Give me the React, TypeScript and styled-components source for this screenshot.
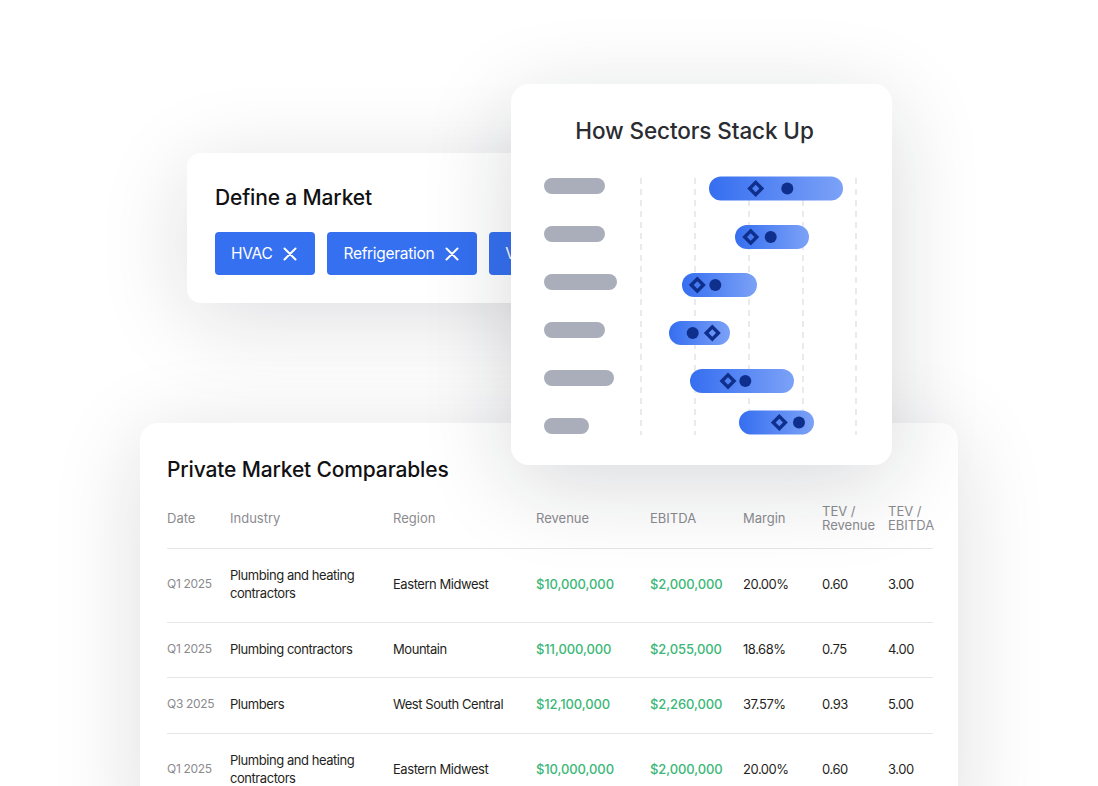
import React from "react";
import styled, { createGlobalStyle } from "styled-components";

const GlobalStyle = createGlobalStyle`
  html, body {
    margin: 0;
    padding: 0;
    background: #ffffff;
    overflow: hidden;
  }
  body {
    font-family: Inter, "Noto Sans", "Liberation Sans", sans-serif;
    color: #1c1c1e;
  }
  * {
    box-sizing: border-box;
  }
`;

const chips = ["HVAC", "Refrigeration", "Ventilation"];

const labels = [61, 61, 73, 61, 70, 45];
const grid = [130, 184, 238, 292, 345];

const bars = [
  { x1: 198, x2: 332, cy: 20.5, diamond: 244.7, dot: 276.3, label: 18 },
  { x1: 224, x2: 298, cy: 69, diamond: 239.7, dot: 259.7, label: 66 },
  { x1: 171, x2: 246, cy: 117, diamond: 186.3, dot: 204.3, label: 114 },
  { x1: 158, x2: 219, cy: 165, diamond: 201.3, dot: 181.7, label: 162 },
  { x1: 179, x2: 283, cy: 213, diamond: 217, dot: 234.3, label: 210 },
  { x1: 228, x2: 303, cy: 254.5, diamond: 268.3, dot: 288, label: 258 },
];

const columns = [
  "Date",
  "Industry",
  "Region",
  "Revenue",
  "EBITDA",
  "Margin",
  "TEV /\nRevenue",
  "TEV /\nEBITDA",
];

const rows = [
  {
    date: "Q1 2025",
    industry: "Plumbing and heating contractors",
    region: "Eastern Midwest",
    revenue: "$10,000,000",
    ebitda: "$2,000,000",
    margin: "20.00%",
    tevRev: "0.60",
    tevEbitda: "3.00",
  },
  {
    date: "Q1 2025",
    industry: "Plumbing contractors",
    region: "Mountain",
    revenue: "$11,000,000",
    ebitda: "$2,055,000",
    margin: "18.68%",
    tevRev: "0.75",
    tevEbitda: "4.00",
  },
  {
    date: "Q3 2025",
    industry: "Plumbers",
    region: "West South Central",
    revenue: "$12,100,000",
    ebitda: "$2,260,000",
    margin: "37.57%",
    tevRev: "0.93",
    tevEbitda: "5.00",
  },
  {
    date: "Q1 2025",
    industry: "Plumbing and heating contractors",
    region: "Eastern Midwest",
    revenue: "$10,000,000",
    ebitda: "$2,000,000",
    margin: "20.00%",
    tevRev: "0.60",
    tevEbitda: "3.00",
  },
];

const CloseIcon = () => (
  <svg width="14" height="14" viewBox="0 0 14 14" fill="none">
    <path
      d="M1.5 1.5 12.5 12.5M12.5 1.5 1.5 12.5"
      stroke="#ffffff"
      strokeWidth="2"
      strokeLinecap="round"
    />
  </svg>
);

const SectorChart = () => (
  <ChartSvg width="381" height="272" viewBox="0 0 381 272">
    <defs>
      <linearGradient id="barFill" x1="0" y1="0" x2="1" y2="0">
        <stop offset="0" stopColor="#356ef0" />
        <stop offset="1" stopColor="#7ca2f7" />
      </linearGradient>
    </defs>
    {grid.map((x) => (
      <line
        key={x}
        x1={x}
        x2={x}
        y1={10}
        y2={267}
        stroke="#e3e4e9"
        strokeWidth="1.5"
        strokeDasharray="6 5"
      />
    ))}
    {labels.map((w, i) => (
      <rect
        key={i}
        x={33}
        y={bars[i].label - 8}
        width={w}
        height={16}
        rx={8}
        fill="#a9aeba"
      />
    ))}
    {bars.map((b, i) => (
      <g key={i}>
        <rect
          x={b.x1}
          y={b.cy - 12}
          width={b.x2 - b.x1}
          height={24}
          rx={12}
          fill="url(#barFill)"
        />
        <rect
          x={b.diamond - 4.3}
          y={b.cy - 4.3}
          width={8.6}
          height={8.6}
          fill="none"
          stroke="#0f2f8c"
          strokeWidth="3.4"
          transform={`rotate(45 ${b.diamond} ${b.cy})`}
        />
        <circle cx={b.dot} cy={b.cy} r={6} fill="#0f2f8c" />
      </g>
    ))}
  </ChartSvg>
);

export default function App() {
  return (
    <Canvas>
      <GlobalStyle />

      <TableCard>
        <CardTitle>Private Market Comparables</CardTitle>
        <HeaderRow>
          {columns.map((c) => (
            <HeaderCell key={c}>{c}</HeaderCell>
          ))}
        </HeaderRow>
        {rows.map((r, i) => (
          <BodyRow key={i}>
            <DateCell>{r.date}</DateCell>
            <Cell>{r.industry}</Cell>
            <Cell>{r.region}</Cell>
            <MoneyCell>{r.revenue}</MoneyCell>
            <MoneyCell>{r.ebitda}</MoneyCell>
            <Cell>{r.margin}</Cell>
            <Cell>{r.tevRev}</Cell>
            <Cell>{r.tevEbitda}</Cell>
          </BodyRow>
        ))}
      </TableCard>

      <MarketCard>
        <CardTitle>Define a Market</CardTitle>
        <ChipRow>
          {chips.map((c) => (
            <Chip key={c}>
              {c}
              <CloseIcon />
            </Chip>
          ))}
        </ChipRow>
      </MarketCard>

      <ChartCard>
        <ChartTitle>How Sectors Stack Up</ChartTitle>
        <SectorChart />
      </ChartCard>
    </Canvas>
  );
}

const Canvas = styled.div`
  position: relative;
  width: 1098px;
  height: 786px;
  overflow: hidden;
  background: #ffffff;
`;

const CardBase = styled.div`
  position: absolute;
  background: #ffffff;
  border-radius: 16px;
  box-shadow: 0 16px 90px rgba(20, 24, 40, 0.14);
`;

const MarketCard = styled(CardBase)`
  left: 187px;
  top: 153px;
  width: 420px;
  height: 150px;
  padding: 32px 28px 28px;
  border-radius: 14px;
  z-index: 2;
`;

const ChartCard = styled(CardBase)`
  left: 511px;
  top: 84px;
  width: 381px;
  height: 381px;
  padding-top: 33px;
  border-radius: 18px;
  z-index: 3;
  box-shadow: 0 20px 90px rgba(20, 24, 40, 0.16);
`;

const TableCard = styled(CardBase)`
  left: 140px;
  top: 423px;
  width: 818px;
  height: 420px;
  padding: 34px 25px 0 27px;
  border-radius: 18px;
  z-index: 1;
`;

const CardTitle = styled.h2`
  margin: 0;
  font-size: 21px;
  line-height: 25px;
  font-weight: 500;
  color: #111113;
  letter-spacing: -0.15px;
`;

const ChartTitle = styled.h2`
  margin: 0 0 23px;
  padding-right: 14px;
  text-align: center;
  font-size: 22.5px;
  line-height: 28px;
  font-weight: 500;
  color: #2a2c31;
  letter-spacing: -0.1px;
`;

const ChartSvg = styled.svg`
  display: block;
`;

const ChipRow = styled.div`
  display: flex;
  gap: 12px;
  margin-top: 22px;
`;

const Chip = styled.div`
  display: flex;
  align-items: center;
  gap: 11px;
  height: 43px;
  padding: 0 18px 0 16px;
  border-radius: 4px;
  background: #3570f0;
  color: #ffffff;
  font-size: 15.5px;
  letter-spacing: -0.3px;
  white-space: nowrap;
`;

const tableColumns = "63px 163px 143px 114px 93px 79px 66px 45px";

const HeaderRow = styled.div`
  display: grid;
  grid-template-columns: ${tableColumns};
  align-items: center;
  height: 61px;
  margin-top: 6px;
  border-bottom: 1px solid #e6e6e8;
`;

const HeaderCell = styled.div`
  font-size: 13px;
  line-height: 14px;
  color: #8b8b8f;
  white-space: pre-line;
`;

const BodyRow = styled.div`
  display: grid;
  grid-template-columns: ${tableColumns};
  align-items: center;
  padding: 17px 0 19.5px;
  border-bottom: 1px solid #e6e6e8;
`;

const Cell = styled.div`
  font-size: 13px;
  line-height: 18px;
  color: #1f1f22;
  letter-spacing: -0.45px;
  padding-right: 12px;
  &:last-child {
    padding-right: 0;
  }
`;

const DateCell = styled(Cell)`
  font-size: 12px;
  color: #8b8b8f;
  letter-spacing: -0.3px;
  white-space: nowrap;
`;

const MoneyCell = styled(Cell)`
  color: #3bb777;
  font-weight: 500;
  letter-spacing: -0.1px;
`;
